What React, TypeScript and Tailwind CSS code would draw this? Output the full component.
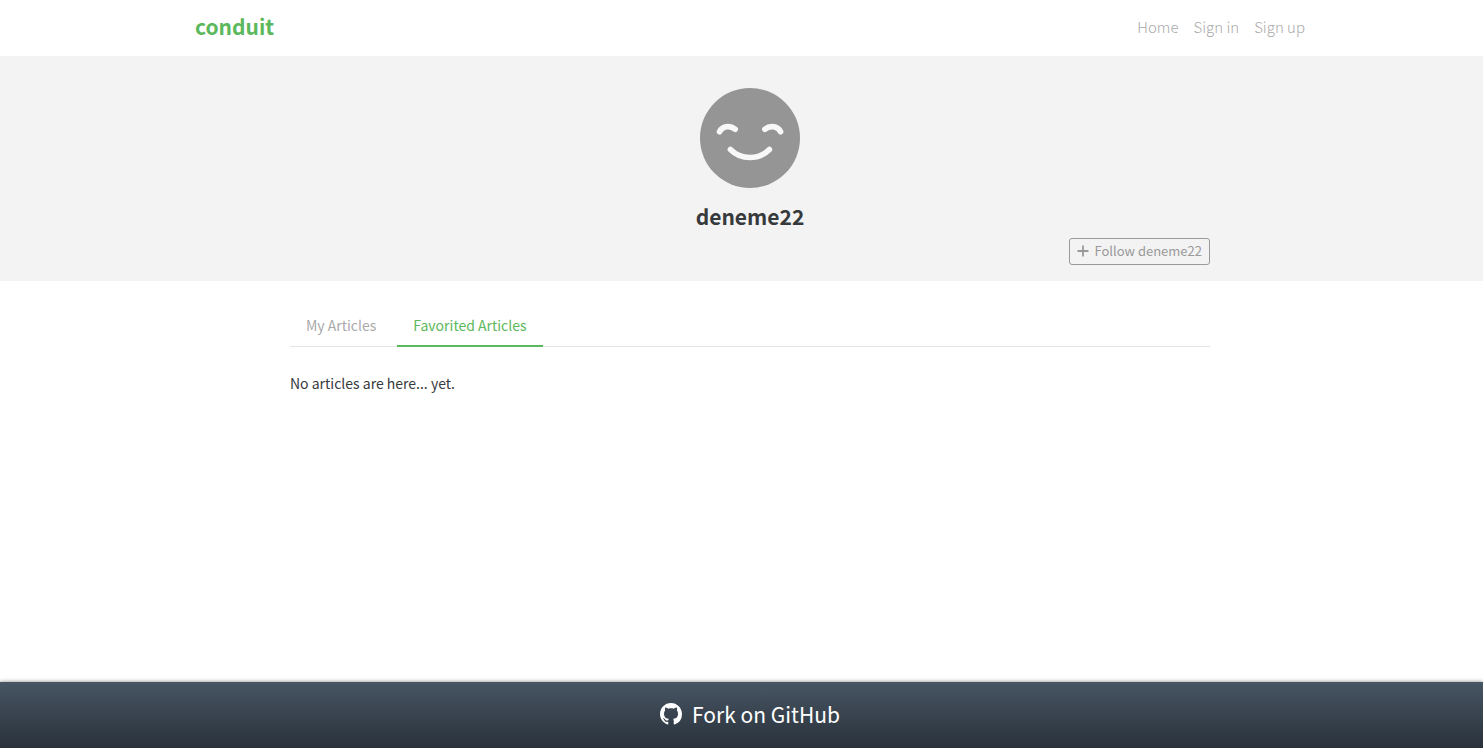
import React from "react";

const navLinks = ["Home", "Sign in", "Sign up"];

function Header() {
  return (
    <header className="h-14 pl-[17px]">
      <nav className="mx-auto flex h-full max-w-[1110px] items-center justify-between pb-0.5">
        <a href="#" className="pb-0.5 text-[21px] leading-6 font-bold text-[#5cb85c]">
          conduit
        </a>
        <ul className="flex gap-[15px] text-[15px] leading-6 font-light text-[#aaa]">
          {navLinks.map((label) => (
            <li key={label}>
              <a href="#">{label}</a>
            </li>
          ))}
        </ul>
      </nav>
    </header>
  );
}

function Avatar() {
  return (
    <svg viewBox="0 0 100 100" className="size-25" role="img" aria-label="deneme22">
      <circle cx="50" cy="50" r="50" fill="#959595" />
      <g fill="none" stroke="#f8f8f8" strokeWidth="5.6" strokeLinecap="round">
        <path d="M19.5 43.8 C22 38.5 29.5 36.8 35.2 41.2" />
        <path d="M64.9 41.2 C70.6 36.8 78.1 38.5 80.6 43.8" />
        <path d="M30.4 61.5 C41 72.2 59 72.2 69.4 61.5" />
      </g>
    </svg>
  );
}

function Profile() {
  return (
    <section className="bg-[#f3f3f3] pt-8 pb-4 pl-[17px]">
      <div className="mx-auto flex max-w-[920px] flex-col items-center">
        <Avatar />
        <h1 className="mt-4 text-[21px] leading-6 font-bold text-[#373a3c]">deneme22</h1>
        <button
          type="button"
          className="mt-[10px] flex h-[27px] items-center gap-1.5 self-end rounded-[3px] border border-[#999] px-[7px] pb-0.5 text-[13px] text-[#999]"
        >
          <svg viewBox="0 0 12 12" className="size-3" aria-hidden="true">
            <path d="M6 1.2V10.8M1.2 6H10.8" stroke="currentColor" strokeWidth="1.8" strokeLinecap="round" />
          </svg>
          Follow deneme22
        </button>
      </div>
    </section>
  );
}

function Articles() {
  return (
    <main className="flex-1 pt-6 pl-[17px]">
      <div className="mx-auto max-w-[920px] text-sm leading-6">
        <div className="flex gap-[5px] border-b border-[#e5e5e5]">
          <a href="#" className="px-4 py-2 text-[#aaa]">
            My Articles
          </a>
          <a href="#" className="-mb-px border-b-2 border-[#5cb85c] px-4 py-2 text-[#5cb85c]">
            Favorited Articles
          </a>
        </div>
        <p className="py-6 text-[#373a3c]">No articles are here... yet.</p>
      </div>
    </main>
  );
}

function GithubMark() {
  return (
    <svg viewBox="0 0 16 16" className="mb-0.5 size-[22px]" fill="currentColor" aria-hidden="true">
      <path d="M8 0C3.58 0 0 3.58 0 8c0 3.54 2.29 6.53 5.47 7.59.4.07.55-.17.55-.38 0-.19-.01-.82-.01-1.49-2.01.37-2.53-.49-2.69-.94-.09-.23-.48-.94-.82-1.13-.28-.15-.68-.52-.01-.53.63-.01 1.08.58 1.23.82.72 1.21 1.87.87 2.33.66.07-.52.28-.87.51-1.07-1.78-.2-3.64-.89-3.64-3.95 0-.87.31-1.59.82-2.15-.08-.2-.36-1.02.08-2.12 0 0 .67-.21 2.2.82.64-.18 1.32-.27 2-.27s1.36.09 2 .27c1.53-1.04 2.2-.82 2.2-.82.44 1.1.16 1.92.08 2.12.51.56.82 1.27.82 2.15 0 3.07-1.87 3.75-3.65 3.95.29.25.54.73.54 1.48 0 1.07-.01 1.93-.01 2.2 0 .21.15.46.55.38A8.01 8.01 0 0 0 16 8c0-4.42-3.58-8-8-8z" />
    </svg>
  );
}

function Footer() {
  return (
    <a
      href="#"
      className="flex h-[66px] items-center justify-center gap-2.5 bg-linear-to-b from-[#485563] to-[#29323c] pl-[17px] text-[21px] text-white shadow-[0_0_4px_rgba(0,0,0,0.5)]"
    >
      <GithubMark />
      Fork on GitHub
    </a>
  );
}

export default function App() {
  return (
    <div className="flex min-h-screen flex-col bg-white font-['Noto_Sans_CJK_SC',sans-serif]">
      <Header />
      <Profile />
      <Articles />
      <Footer />
    </div>
  );
}
